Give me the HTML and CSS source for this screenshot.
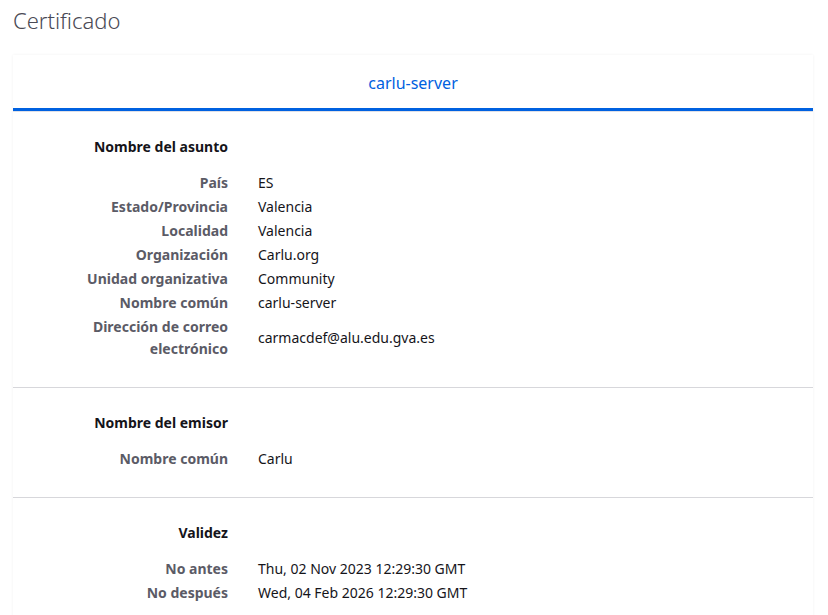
FILE: index.html
```html
<!DOCTYPE html>
<html lang="es">
<head>
<meta charset="utf-8">
<title>Certificado</title>
<link rel="stylesheet" href="styles.css">
</head>
<body>
<h1 class="page-title">Certificado</h1>
<div class="card">
  <div class="tabs">
    <div class="tab selected">carlu-server</div>
  </div>
  <section class="info-group">
    <div class="group-title">Nombre del asunto</div>
    <div class="row"><div class="label">País</div><div class="value">ES</div></div>
    <div class="row"><div class="label">Estado/Provincia</div><div class="value">Valencia</div></div>
    <div class="row"><div class="label">Localidad</div><div class="value">Valencia</div></div>
    <div class="row"><div class="label">Organización</div><div class="value">Carlu.org</div></div>
    <div class="row"><div class="label">Unidad organizativa</div><div class="value">Community</div></div>
    <div class="row"><div class="label">Nombre común</div><div class="value">carlu-server</div></div>
    <div class="row"><div class="label">Dirección de correo electrónico</div><div class="value">carmacdef@alu.edu.gva.es</div></div>
  </section>
  <section class="info-group">
    <div class="group-title">Nombre del emisor</div>
    <div class="row"><div class="label">Nombre común</div><div class="value">Carlu</div></div>
  </section>
  <section class="info-group">
    <div class="group-title">Validez</div>
    <div class="row"><div class="label">No antes</div><div class="value">Thu, 02 Nov 2023 12:29:30 GMT</div></div>
    <div class="row"><div class="label">No después</div><div class="value">Wed, 04 Feb 2026 12:29:30 GMT</div></div>
  </section>
</div>
</body>
</html>
```

FILE: styles.css
```css
html, body {
  margin: 0;
  padding: 0;
  background: #ffffff;
}

body {
  font-family: "Noto Sans", "Open Sans", sans-serif;
  color: #15141a;
  padding: 0 15px 0 13px;
  overflow: hidden;
  height: 615px;
}

.page-title {
  margin: 0;
  padding-top: 5px;
  font-size: 22px;
  font-weight: 300;
  line-height: 30px;
  color: #4a4a55;
  height: 50px;
}

.card {
  background: #ffffff;
  box-shadow: 0 0 3px rgba(0, 0, 0, 0.06);
  width: 800px;
}

.tabs {
  display: flex;
  border-bottom: 1px solid #e0e0e6;
}

.tab {
  flex: 1;
  text-align: center;
  font-size: 16px;
  color: #0061e0;
  height: 53px;
  line-height: 56px;
  border-bottom: 3px solid #0061e0;
  box-sizing: content-box;
}

.info-group {
  padding: 23px 0 26px;
  border-bottom: 1px solid #d7d7db;
}

.group-title {
  width: 215px;
  text-align: right;
  font-size: 14px;
  font-weight: 700;
  line-height: 24px;
  color: #15141a;
  margin-bottom: 12px;
}

.row {
  display: grid;
  grid-template-columns: 215px 1fr;
  column-gap: 30px;
  align-items: center;
  padding: 1px 0;
  font-size: 14px;
  line-height: 22px;
}

.label {
  text-align: right;
  font-weight: 700;
  color: #5b5b66;
}

.value {
  color: #15141a;
}
```
